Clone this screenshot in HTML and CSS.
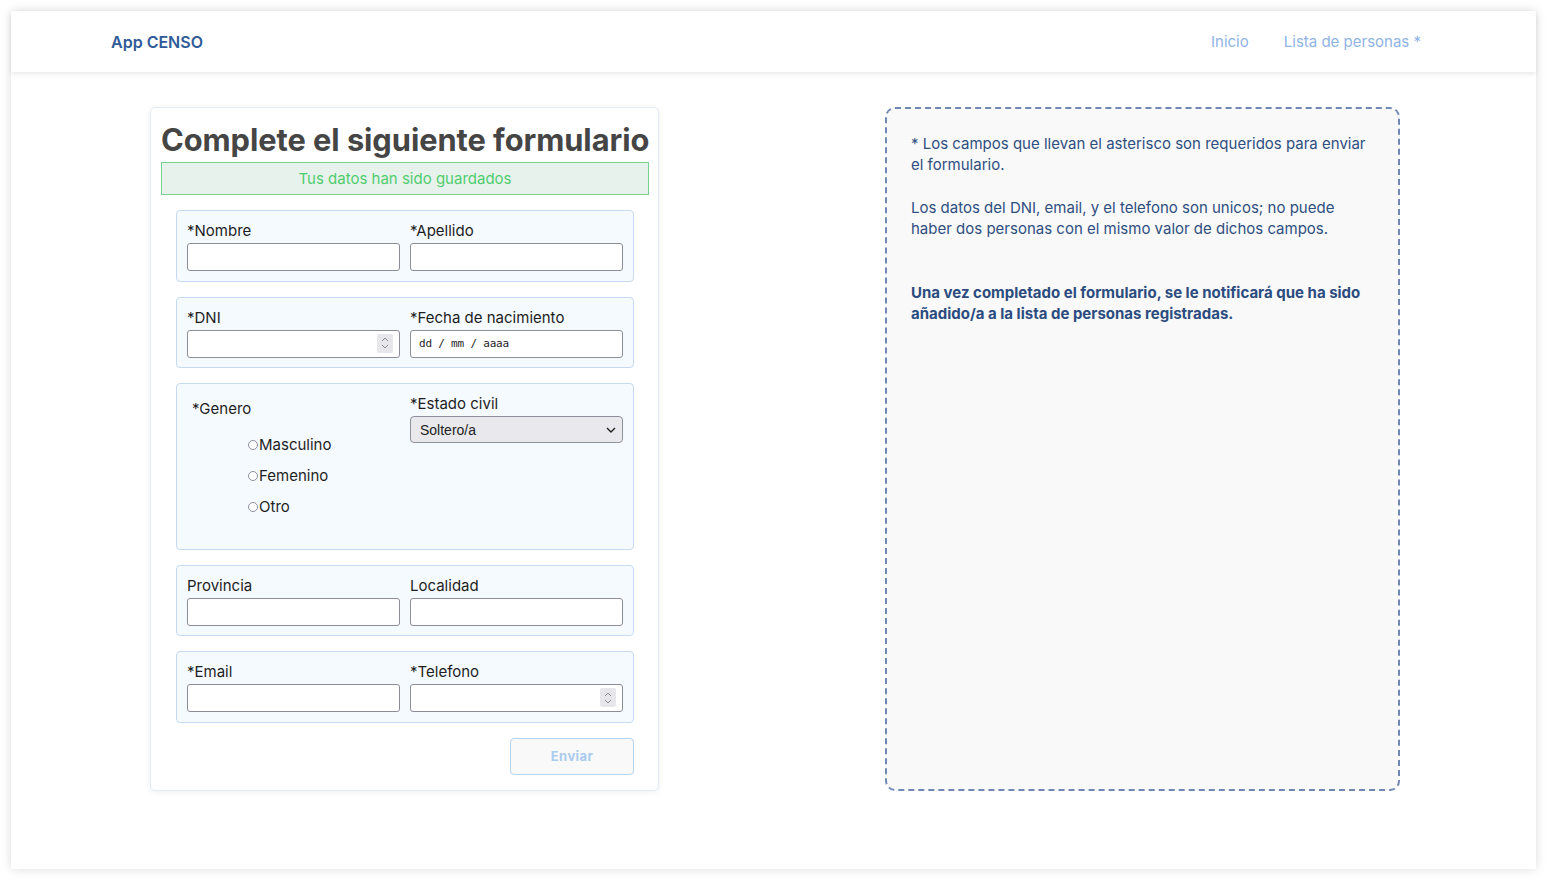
FILE: index.html
```html
<!DOCTYPE html>
<html lang="es">
<head>
    <meta charset="UTF-8">
    <meta name="viewport" content="width=device-width, initial-scale=1.0">
    <title>App CENSO</title>
    <link rel="stylesheet" href="styles.css">
</head>
<body>
<div class="frame">
    <nav class="navbar">
        <a class="brand" href="#">App CENSO</a>
        <div class="nav-links">
            <a href="#">Inicio</a>
            <a href="#">Lista de personas *</a>
        </div>
    </nav>

    <main class="main">
        <form class="form-card">
            <h1 class="form-title">Complete el siguiente formulario</h1>
            <div class="alert-ok">Tus datos han sido guardados</div>

            <div class="groups">
                <div class="group">
                    <div class="field">
                        <label>*Nombre</label>
                        <input type="text" class="input">
                    </div>
                    <div class="field">
                        <label>*Apellido</label>
                        <input type="text" class="input">
                    </div>
                </div>

                <div class="group">
                    <div class="field">
                        <label>*DNI</label>
                        <div class="num-wrap">
                            <input type="text" class="input">
                            <span class="spin">
                                <svg width="8" height="14" viewBox="0 0 8 14"><path d="M1 5 L4 2 L7 5 M1 9 L4 12 L7 9" fill="none" stroke="#8a8a96" stroke-width="1"/></svg>
                            </span>
                        </div>
                    </div>
                    <div class="field">
                        <label>*Fecha de nacimiento</label>
                        <input type="text" class="input date" placeholder="dd / mm / aaaa">
                    </div>
                </div>

                <div class="group">
                    <div class="field">
                        <div class="genero-label">*Genero</div>
                        <div class="radios">
                            <label class="radio"><input type="radio" name="genero">Masculino</label>
                            <label class="radio"><input type="radio" name="genero">Femenino</label>
                            <label class="radio"><input type="radio" name="genero">Otro</label>
                        </div>
                    </div>
                    <div class="field">
                        <label>*Estado civil</label>
                        <div class="select">
                            <span>Soltero/a</span>
                            <svg width="10" height="6" viewBox="0 0 10 6"><path d="M1 1 L5 5 L9 1" fill="none" stroke="#222" stroke-width="1.4"/></svg>
                        </div>
                    </div>
                </div>

                <div class="group">
                    <div class="field">
                        <label>Provincia</label>
                        <input type="text" class="input">
                    </div>
                    <div class="field">
                        <label>Localidad</label>
                        <input type="text" class="input">
                    </div>
                </div>

                <div class="group">
                    <div class="field">
                        <label>*Email</label>
                        <input type="text" class="input">
                    </div>
                    <div class="field">
                        <label>*Telefono</label>
                        <div class="num-wrap">
                            <input type="text" class="input">
                            <span class="spin">
                                <svg width="8" height="14" viewBox="0 0 8 14"><path d="M1 5 L4 2 L7 5 M1 9 L4 12 L7 9" fill="none" stroke="#8a8a96" stroke-width="1"/></svg>
                            </span>
                        </div>
                    </div>
                </div>

                <div class="actions">
                    <button type="button" class="btn-send">Enviar</button>
                </div>
            </div>
        </form>

        <aside class="info">
            <p>* Los campos que llevan el asterisco son requeridos para enviar el formulario.</p>
            <p class="p2">Los datos del DNI, email, y el telefono son unicos; no puede haber dos personas con el mismo valor de dichos campos.</p>
            <p class="p3">Una vez completado el formulario, se le notificará que ha sido añadido/a a la lista de personas registradas.</p>
        </aside>
    </main>
</div>
</body>
</html>
```
FILE: styles.css
```css
body {
    margin: 0;
    background: #fff;
    font-family: Inter, "Open Sans", sans-serif;
}
.frame {
    margin: 11px;
    width: 1525px;
    height: 858px;
    background: #fff;
    box-shadow: 0 0 10px rgba(0, 0, 0, 0.14);
}
.navbar {
    height: 61px;
    display: flex;
    align-items: center;
    justify-content: space-between;
    padding: 0 115px 0 100px;
    box-shadow: 0 2px 5px rgba(0, 0, 0, 0.09);
    position: relative;
}
.brand {
    color: #2f5b98;
    font-weight: 600;
    font-size: 16px;
    text-decoration: none;
}
.nav-links {
    display: flex;
    gap: 35px;
}
.nav-links a {
    color: #8fb4e6;
    font-size: 15px;
    text-decoration: none;
}
.main {
    display: flex;
    align-items: flex-start;
    gap: 226px;
    padding: 35px 0 0 139px;
}
.form-card {
    width: 509px;
    height: 684px;
    box-sizing: border-box;
    border: 1px solid #e2eaf3;
    border-radius: 5px;
    box-shadow: 0 1px 6px rgba(0, 0, 0, 0.07);
    padding: 13px 9px 0 10px;
}
.form-title {
    margin: 0;
    font-size: 30.8px;
    line-height: 37px;
    font-weight: 700;
    color: #454545;
    text-align: center;
    letter-spacing: -0.05px;
    white-space: nowrap;
}
.alert-ok {
    margin-top: 4px;
    height: 33px;
    box-sizing: border-box;
    border: 1px solid #76d28e;
    background: #e8f2ed;
    color: #4fcd6e;
    font-size: 15px;
    display: flex;
    align-items: center;
    justify-content: center;
}
.groups {
    padding: 15px 15px 0 15px;
    display: flex;
    flex-direction: column;
    gap: 15px;
}
.group {
    display: grid;
    grid-template-columns: 213px 213px;
    column-gap: 10px;
    padding: 10px 10px 9.5px;
    border: 1px solid #c6dbf1;
    border-radius: 4px;
    background: #f5faff;
}
.field label {
    display: block;
    font-size: 15px;
    line-height: 20px;
    color: #1e1e1e;
    margin-bottom: 2px;
}
.input {
    display: block;
    width: 213px;
    height: 28px;
    box-sizing: border-box;
    border: 1px solid #8d8d99;
    border-radius: 3px;
    background: #fff;
    margin: 0;
    padding: 0 8px;
    font-size: 13px;
}
.date {
    font-family: "DejaVu Sans Mono", monospace;
    font-size: 11px;
    letter-spacing: -0.2px;
}
.date::placeholder {
    color: #1e1e1e;
    opacity: 1;
}
.num-wrap {
    position: relative;
}
.spin {
    position: absolute;
    right: 7px;
    top: 4px;
    width: 16px;
    height: 19px;
    background: #e6e6eb;
    border-radius: 2px;
    display: flex;
    align-items: center;
    justify-content: center;
}
.genero-label {
    font-size: 15px;
    line-height: 20px;
    color: #1e1e1e;
    margin: 5px 0 0 5px;
}
.radios {
    margin: 10px 0 17px 61px;
}
.field .radio {
    display: flex;
    align-items: center;
    height: 31px;
    margin: 0;
    font-size: 15px;
    color: #1e1e1e;
}
.radio input {
    appearance: none;
    width: 10px;
    height: 10px;
    margin: 0 1px 0 0;
    border: 1px solid #8f8f9d;
    border-radius: 50%;
    background: #fff;
}
.select {
    height: 27px;
    box-sizing: border-box;
    border: 1px solid #8f8f9d;
    border-radius: 4px;
    background: #e9e9ed;
    display: flex;
    align-items: center;
    justify-content: space-between;
    padding: 0 6px 0 9px;
    font-family: "Liberation Sans", sans-serif;
    font-size: 14px;
    color: #1e1e1e;
}
.actions {
    display: flex;
    justify-content: flex-end;
}
.btn-send {
    width: 124px;
    height: 37px;
    border: 1px solid #b5d4f2;
    border-radius: 4px;
    background: #f9f9fa;
    color: #a8cbee;
    font-family: Inter, sans-serif;
    font-weight: 700;
    font-size: 13px;
    letter-spacing: 0.4px;
}
.info {
    width: 515px;
    height: 684px;
    box-sizing: border-box;
    border: 2px dashed #7088b3;
    border-radius: 10px;
    background: #f9f9f9;
    padding: 24px 24px 0 24px;
    color: #2f4f80;
    font-size: 15px;
    line-height: 21px;
}
.info p {
    margin: 0;
}
.info .p2 {
    margin-top: 22px;
}
.info .p3 {
    margin-top: 43px;
    font-weight: 700;
    color: #2c4c7f;
}
```
